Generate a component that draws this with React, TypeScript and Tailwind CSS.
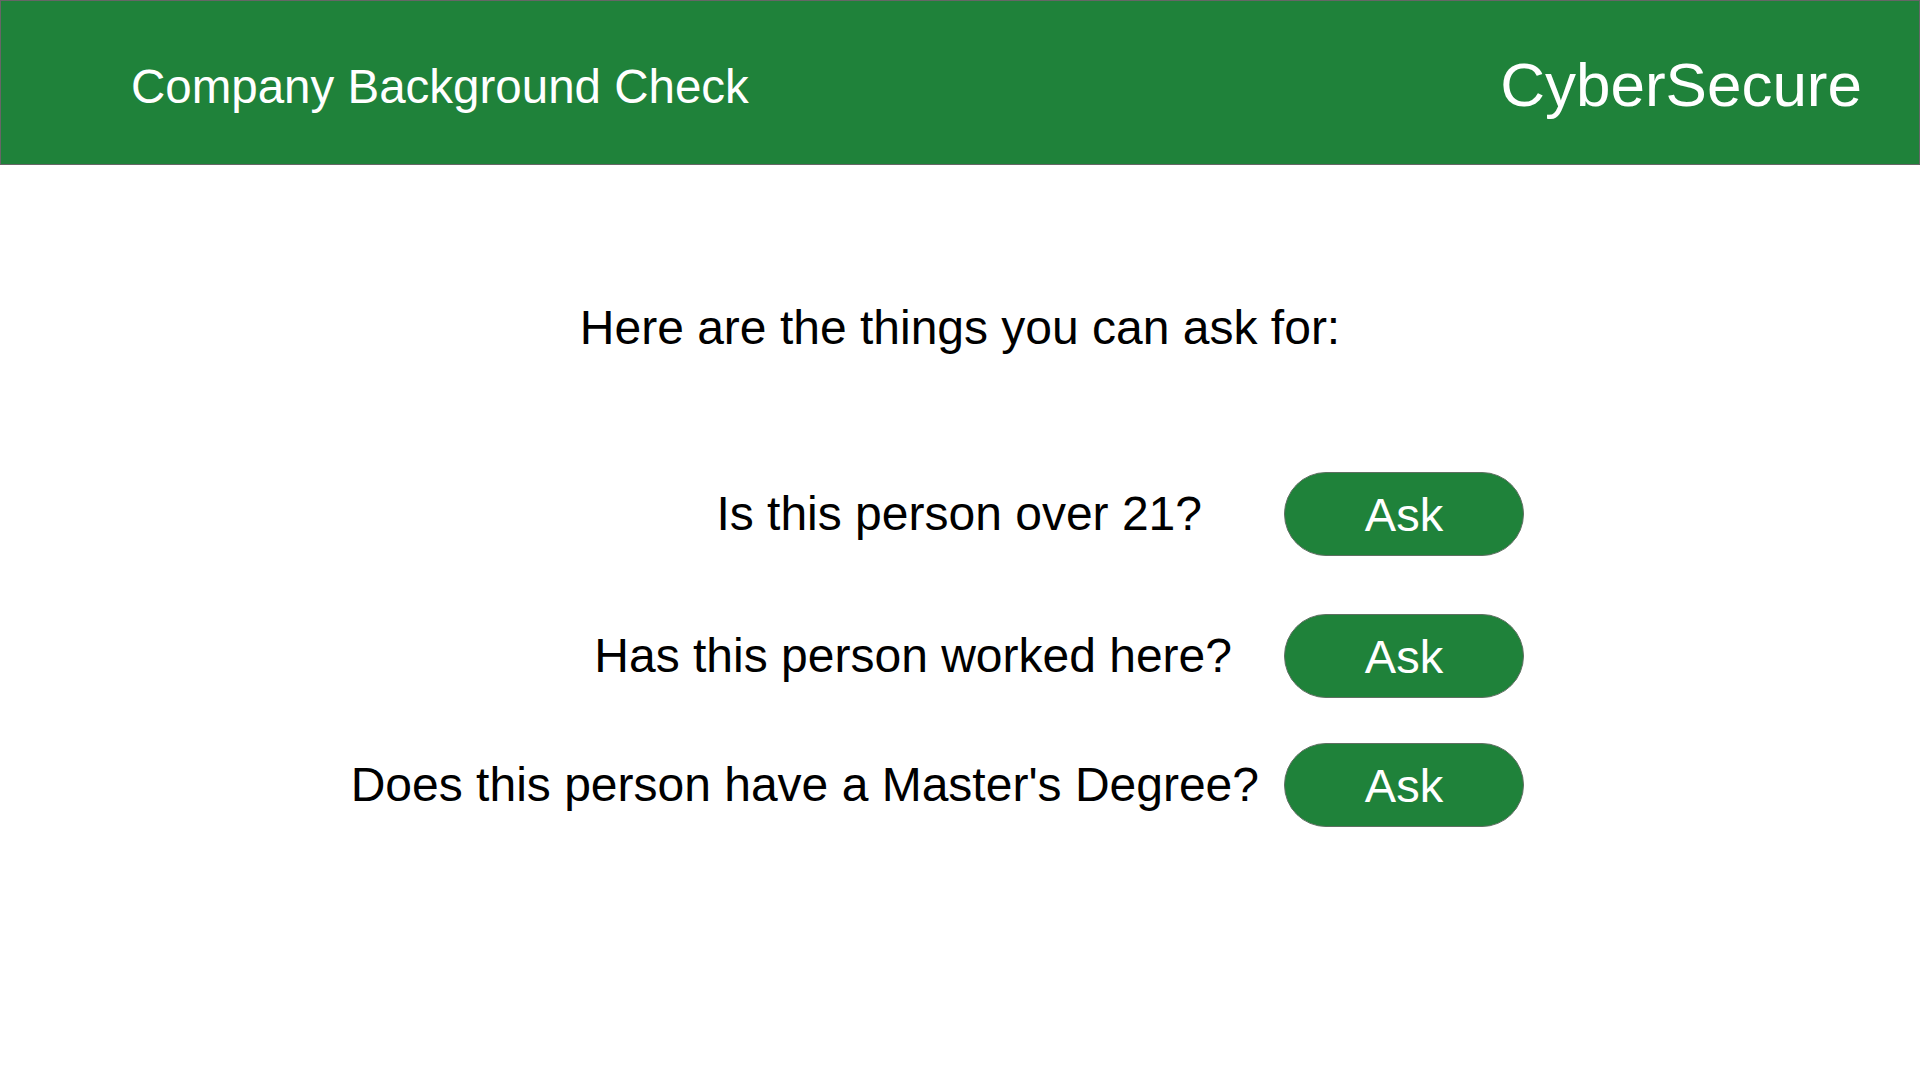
const QUESTIONS = [
  { label: "Is this person over 21?", pad: "pr-[57px]", gap: "mt-[116px]" },
  { label: "Has this person worked here?", pad: "pr-[27px]", gap: "mt-[58px]" },
  { label: "Does this person have a Master's Degree?", pad: "pr-0", gap: "mt-[45px]" },
];

function AskButton() {
  return (
    <button className="flex h-[84px] w-[240px] items-center justify-center rounded-full border border-[#5f6f62] bg-[#1f823a] text-[47px] leading-none text-white">
      Ask
    </button>
  );
}

export default function App() {
  return (
    <div className="min-h-[1080px] w-full bg-white font-['Liberation_Sans',Arial,sans-serif] text-black">
      <header className="flex h-[165px] items-center justify-between border border-[#666666] bg-[#1f823a] pl-[130px] pr-[57px] text-white">
        <h1 className="pt-[8px] text-[47.5px] leading-none">Company Background Check</h1>
        <span className="pt-[4px] text-[62px] leading-none">CyberSecure</span>
      </header>

      <main className="flex flex-col">
        <p className="mt-[135px] text-center text-[48px] leading-[56px]">
          Here are the things you can ask for:
        </p>

        {QUESTIONS.map((q) => (
          <div key={q.label} className={`flex items-center justify-end pr-[396px] ${q.gap}`}>
            <span className={`text-[48px] leading-[56px] ${q.pad}`}>{q.label}</span>
            <div className="ml-[25px]">
              <AskButton />
            </div>
          </div>
        ))}
      </main>
    </div>
  );
}
